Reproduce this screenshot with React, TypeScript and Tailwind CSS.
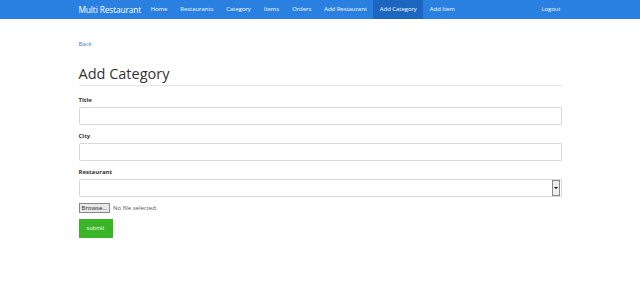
import React from "react";

const links = ["Home", "Restaurants", "Category", "Items", "Orders", "Add Restaurant", "Add Category", "Add Item"];

function Field(props: any) {
  return (
    <div className="mb-[7px]">
      <div className="text-[6px] font-bold text-[#333] leading-[8px] mb-[3px]">{props.label}</div>
      {props.children}
    </div>
  );
}

export default function App() {
  return (
    <div className="w-[640px] h-[303px] bg-white" style={{ fontFamily: '"Open Sans", "Noto Sans", sans-serif' }}>
      {/* Navbar */}
      <div className="h-[19px] bg-[#2a80e0] flex items-stretch">
        <div className="w-[483px] mx-auto flex items-stretch">
          <div className="text-white text-[8.3px] leading-[19px] mr-[3px] tracking-[-0.1px]">Multi Restaurant</div>
          {links.map((l) => (
            <div
              key={l}
              className={
                "text-white text-[5.9px] leading-[19px] px-[6.5px] " +
                (l === "Add Category" ? "bg-[#1d66bf]" : "")
              }
            >
              {l}
            </div>
          ))}
          <div className="flex-1" />
          <div className="text-white text-[5.9px] leading-[19px] mr-[1px]">Logout</div>
        </div>
      </div>

      {/* Content */}
      <div className="w-[483px] mx-auto">
        <div className="text-[6px] text-[#3a7fcf] mt-[21px] leading-[8px]">Back</div>
        <div className="text-[14.5px] text-[#333] mt-[17px] leading-[18px]">Add Category</div>
        <div className="h-px bg-[#e6e6e6] mt-[2px] mb-[10px]" />

        <Field label="Title">
          <div className="h-[18px] border border-[#d8d8d8] rounded-[1px]" />
        </Field>
        <Field label="City">
          <div className="h-[18px] border border-[#d8d8d8] rounded-[1px]" />
        </Field>
        <Field label="Restaurant">
          <div className="h-[18px] border border-[#d8d8d8] rounded-[1px] flex justify-end items-center pr-px">
            <div className="w-[8px] h-[16px] border border-[#888] bg-[#eee] flex items-center justify-center">
              <div className="w-0 h-0 border-l-[2px] border-r-[2px] border-t-[2px] border-l-transparent border-r-transparent border-t-black" />
            </div>
          </div>
        </Field>

        <div className="flex items-center -mt-[1px]">
          <div className="h-[10px] px-[2px] border border-[#888] bg-[#e8e8e8] text-[6px] leading-[8px] text-[#222]">Browse...</div>
          <div className="text-[6px] text-[#555] ml-[3px]">No file selected.</div>
        </div>

        <div className="mt-[6px] w-[34px] h-[19px] bg-[#3ab526] text-white text-[5.5px] flex items-center justify-center">submit</div>
      </div>
    </div>
  );
}
